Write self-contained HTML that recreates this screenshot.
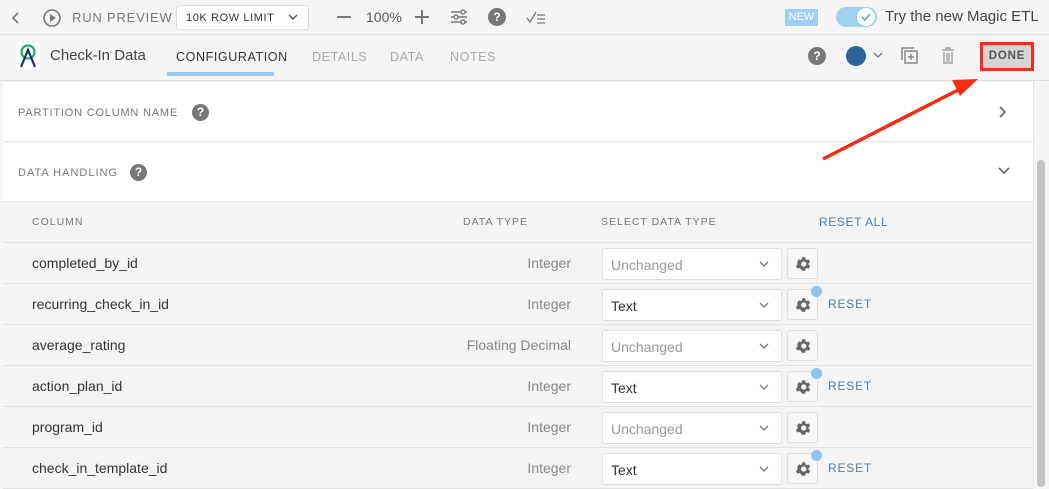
<!DOCTYPE html>
<html><head><style>
*{box-sizing:border-box;margin:0;padding:0}
body{width:1049px;height:487px;overflow:hidden;background:#f5f5f5;font-family:"Liberation Sans",sans-serif;position:relative;color:#333}
.a{position:absolute}
.cap{font-size:11px;letter-spacing:1px;color:#777}
.q{position:absolute;width:17px;height:17px;border-radius:50%;background:#777;color:#fff;font-size:12px;font-weight:bold;text-align:center;line-height:17px}
.row{position:absolute;left:3px;width:1030px;height:41px;border-bottom:1px solid #e2e2e2;background:#f4f4f4}
.cn{position:absolute;left:29px;top:12px;font-size:14px;color:#333}
.dt{position:absolute;right:462px;top:12px;font-size:14px;color:#888}
.sel{position:absolute;left:599px;top:5px;width:180px;height:32px;background:#fff;border:1px solid #ddd;border-radius:3px;font-size:14px;padding:8px 0 0 8px}
.sel svg{position:absolute;right:12px;top:12px}
.g{position:absolute;left:784px;top:5px;width:31px;height:31px;background:#f7f7f7;border:1px solid #ddd;border-radius:3px}
.g svg{position:absolute;left:6px;top:6px}
.dot{position:absolute;left:808px;top:2px;width:11px;height:11px;border-radius:50%;background:#8ec5ee}
.rs{position:absolute;left:825px;top:13px;font-size:12px;letter-spacing:.8px;color:#4d7fa8}
.tab{position:absolute;top:50px;font-size:12.5px;letter-spacing:.6px;color:#aaa}
</style></head><body>
<div class="a" style="left:0;top:0;width:1049px;height:35px;border-bottom:1px solid #e0e0e0"></div>
<svg class="a" style="left:11px;top:11px" width="10" height="14"><path d="M7 2L2 7l5 5" stroke="#777" stroke-width="1.6" fill="none"/></svg>
<svg class="a" style="left:42px;top:8px" width="20" height="20"><circle cx="10" cy="10" r="8" stroke="#777" stroke-width="1.6" fill="none"/><path d="M8 6v8l6-4z" fill="#777"/></svg>
<div class="a" style="left:72px;top:10px;font-size:13px;letter-spacing:.8px;color:#777">RUN PREVIEW</div>
<div class="a" style="left:176px;top:5px;width:133px;height:25px;background:#fff;border:1px solid #ddd;border-radius:3px;font-size:11px;letter-spacing:.6px;padding:6px 0 0 9px;color:#333">10K ROW LIMIT</div>
<svg class="a" style="left:288px;top:14px" width="10" height="7"><path d="M1 1l4 4 4-4" stroke="#555" stroke-width="1.4" fill="none"/></svg>
<div class="a" style="left:337px;top:16px;width:14px;height:1.6px;background:#777"></div>
<div class="a" style="left:366px;top:9px;font-size:14px;color:#555">100%</div>
<div class="a" style="left:415px;top:16px;width:14px;height:1.6px;background:#777"></div>
<div class="a" style="left:421px;top:10px;width:1.6px;height:14px;background:#777"></div>
<svg class="a" style="left:450px;top:9px" width="18" height="16"><g stroke="#777" stroke-width="1.4" fill="#f5f5f5"><path d="M1 3h16M1 8h16M1 13h16"/><circle cx="13" cy="3" r="2"/><circle cx="6" cy="8" r="2"/><circle cx="13" cy="13" r="2"/></g></svg>
<div class="q" style="left:488px;top:8px;width:18px;height:18px;line-height:18px">?</div>
<svg class="a" style="left:526px;top:10px" width="20" height="14"><path d="M1 8l3 4 6-10M11 5h8M11 9h8M11 13h8" stroke="#777" stroke-width="1.3" fill="none"/></svg>
<div class="a" style="left:785px;top:9px;width:33px;height:17px;background:#9fd0f2;color:#fff;font-size:11px;text-align:center;line-height:17px">NEW</div>
<div class="a" style="left:836px;top:7px;width:41px;height:20px;border-radius:10px;background:#9fd0f2"></div>
<div class="a" style="left:857px;top:8px;width:18px;height:18px;border-radius:50%;background:#fff"></div>
<svg class="a" style="left:860px;top:11px" width="12" height="12"><path d="M2 6l3 3 5-6" stroke="#5aa6de" stroke-width="1.6" fill="none"/></svg>
<div class="a" style="left:885px;top:8px;font-size:15px;color:#444">Try the new Magic ETL</div>
<div class="a" style="left:0;top:80px;width:1049px;height:1px;background:#e0e0e0"></div>
<svg class="a" style="left:16px;top:43px" width="24" height="26"><rect width="24" height="26" fill="#fff"/><circle cx="12" cy="9" r="6.5" stroke="#1fae6a" stroke-width="2.2" fill="none"/><path d="M5 24L12 7l7 17" stroke="#1d2f5a" stroke-width="2.2" fill="none"/></svg>
<div class="a" style="left:50px;top:47px;font-size:15px;color:#444">Check-In Data</div>
<div class="tab" style="left:176px;color:#333">CONFIGURATION</div>
<div class="a" style="left:167px;top:72px;width:107px;height:4px;background:#99c9ee"></div>
<div class="tab" style="left:312px">DETAILS</div>
<div class="tab" style="left:390px">DATA</div>
<div class="tab" style="left:450px">NOTES</div>
<div class="q" style="left:808px;top:47px;width:18px;height:18px;line-height:18px">?</div>
<div class="a" style="left:846px;top:46px;width:20px;height:20px;border-radius:50%;background:#2f6299"></div>
<svg class="a" style="left:873px;top:52px" width="10" height="7"><path d="M1 1l4 4 4-4" stroke="#777" stroke-width="1.3" fill="none"/></svg>
<svg class="a" style="left:900px;top:46px" width="19" height="19"><path d="M2 14V2h12" stroke="#888" stroke-width="1.5" fill="none"/><rect x="5" y="5" width="12" height="12" stroke="#888" stroke-width="1.5" fill="none"/><path d="M11 8v6M8 11h6" stroke="#888" stroke-width="1.5"/></svg>
<svg class="a" style="left:941px;top:47px" width="14" height="17"><path d="M1 3h12M5 3V1h4v2M3 5v11h8V5M6 6v9M8 6v9" stroke="#999" stroke-width="1.3" fill="none"/></svg>
<div class="a" style="left:980px;top:42px;width:54px;height:29px;border:3px solid #f22d14;background:#d4d4d4;font-size:11.5px;font-weight:bold;letter-spacing:.8px;color:#555;text-align:center;line-height:23px">DONE</div>
<div class="a" style="left:3px;top:82px;width:1030px;height:60px;background:#fff;border-bottom:1px solid #e6e6e6"></div>
<div class="a cap" style="left:18px;top:107px;letter-spacing:.8px">PARTITION COLUMN NAME</div>
<div class="q" style="left:192px;top:104px">?</div>
<svg class="a" style="left:998px;top:105px" width="10" height="14"><path d="M2 2l5 5-5 5" stroke="#666" stroke-width="1.6" fill="none"/></svg>
<div class="a" style="left:3px;top:143px;width:1030px;height:59px;background:#fff;border-bottom:1px solid #e6e6e6"></div>
<div class="a cap" style="left:18px;top:167px">DATA HANDLING</div>
<div class="q" style="left:130px;top:164px">?</div>
<svg class="a" style="left:997px;top:166px" width="14" height="10"><path d="M2 2l5 5 5-5" stroke="#666" stroke-width="1.6" fill="none"/></svg>
<div class="row" style="top:202px;height:41px"></div>
<div class="a cap" style="left:32px;top:216px;font-size:10.5px">COLUMN</div>
<div class="a cap" style="left:463px;top:216px;font-size:10.5px">DATA TYPE</div>
<div class="a cap" style="left:601px;top:216px;font-size:10.5px">SELECT DATA TYPE</div>
<div class="a" style="left:819px;top:215px;font-size:12px;letter-spacing:.6px;color:#4d7fa8">RESET ALL</div>

<div class="row" style="top:243px"><div class="cn">completed_by_id</div><div class="dt">Integer</div><div class="sel" style="color:#999">Unchanged<svg width="10" height="7"><path d="M1 1l4 4 4-4" stroke="#777" stroke-width="1.3" fill="none"/></svg></div><div class="g"><svg width="18" height="18" viewBox="0 0 24 24"><path fill="#666" d="M19.4 13a7.5 7.5 0 000-2l2.1-1.6-2-3.5-2.5 1a7.7 7.7 0 00-1.7-1L15 3h-4l-.4 2.6a7.7 7.7 0 00-1.7 1l-2.5-1-2 3.5L4.6 11a7.5 7.5 0 000 2l-2.1 1.6 2 3.5 2.5-1a7.7 7.7 0 001.7 1L11 21h4l.4-2.6a7.7 7.7 0 001.7-1l2.5 1 2-3.5zM13 15.5a3.5 3.5 0 110-7 3.5 3.5 0 010 7z"/></svg></div></div>
<div class="row" style="top:284px"><div class="cn">recurring_check_in_id</div><div class="dt">Integer</div><div class="sel" style="color:#333">Text<svg width="10" height="7"><path d="M1 1l4 4 4-4" stroke="#777" stroke-width="1.3" fill="none"/></svg></div><div class="g"><svg width="18" height="18" viewBox="0 0 24 24"><path fill="#666" d="M19.4 13a7.5 7.5 0 000-2l2.1-1.6-2-3.5-2.5 1a7.7 7.7 0 00-1.7-1L15 3h-4l-.4 2.6a7.7 7.7 0 00-1.7 1l-2.5-1-2 3.5L4.6 11a7.5 7.5 0 000 2l-2.1 1.6 2 3.5 2.5-1a7.7 7.7 0 001.7 1L11 21h4l.4-2.6a7.7 7.7 0 001.7-1l2.5 1 2-3.5zM13 15.5a3.5 3.5 0 110-7 3.5 3.5 0 010 7z"/></svg></div><div class="dot"></div><div class="rs">RESET</div></div>
<div class="row" style="top:325px"><div class="cn">average_rating</div><div class="dt">Floating Decimal</div><div class="sel" style="color:#999">Unchanged<svg width="10" height="7"><path d="M1 1l4 4 4-4" stroke="#777" stroke-width="1.3" fill="none"/></svg></div><div class="g"><svg width="18" height="18" viewBox="0 0 24 24"><path fill="#666" d="M19.4 13a7.5 7.5 0 000-2l2.1-1.6-2-3.5-2.5 1a7.7 7.7 0 00-1.7-1L15 3h-4l-.4 2.6a7.7 7.7 0 00-1.7 1l-2.5-1-2 3.5L4.6 11a7.5 7.5 0 000 2l-2.1 1.6 2 3.5 2.5-1a7.7 7.7 0 001.7 1L11 21h4l.4-2.6a7.7 7.7 0 001.7-1l2.5 1 2-3.5zM13 15.5a3.5 3.5 0 110-7 3.5 3.5 0 010 7z"/></svg></div></div>
<div class="row" style="top:366px"><div class="cn">action_plan_id</div><div class="dt">Integer</div><div class="sel" style="color:#333">Text<svg width="10" height="7"><path d="M1 1l4 4 4-4" stroke="#777" stroke-width="1.3" fill="none"/></svg></div><div class="g"><svg width="18" height="18" viewBox="0 0 24 24"><path fill="#666" d="M19.4 13a7.5 7.5 0 000-2l2.1-1.6-2-3.5-2.5 1a7.7 7.7 0 00-1.7-1L15 3h-4l-.4 2.6a7.7 7.7 0 00-1.7 1l-2.5-1-2 3.5L4.6 11a7.5 7.5 0 000 2l-2.1 1.6 2 3.5 2.5-1a7.7 7.7 0 001.7 1L11 21h4l.4-2.6a7.7 7.7 0 001.7-1l2.5 1 2-3.5zM13 15.5a3.5 3.5 0 110-7 3.5 3.5 0 010 7z"/></svg></div><div class="dot"></div><div class="rs">RESET</div></div>
<div class="row" style="top:407px"><div class="cn">program_id</div><div class="dt">Integer</div><div class="sel" style="color:#999">Unchanged<svg width="10" height="7"><path d="M1 1l4 4 4-4" stroke="#777" stroke-width="1.3" fill="none"/></svg></div><div class="g"><svg width="18" height="18" viewBox="0 0 24 24"><path fill="#666" d="M19.4 13a7.5 7.5 0 000-2l2.1-1.6-2-3.5-2.5 1a7.7 7.7 0 00-1.7-1L15 3h-4l-.4 2.6a7.7 7.7 0 00-1.7 1l-2.5-1-2 3.5L4.6 11a7.5 7.5 0 000 2l-2.1 1.6 2 3.5 2.5-1a7.7 7.7 0 001.7 1L11 21h4l.4-2.6a7.7 7.7 0 001.7-1l2.5 1 2-3.5zM13 15.5a3.5 3.5 0 110-7 3.5 3.5 0 010 7z"/></svg></div></div>
<div class="row" style="top:448px"><div class="cn">check_in_template_id</div><div class="dt">Integer</div><div class="sel" style="color:#333">Text<svg width="10" height="7"><path d="M1 1l4 4 4-4" stroke="#777" stroke-width="1.3" fill="none"/></svg></div><div class="g"><svg width="18" height="18" viewBox="0 0 24 24"><path fill="#666" d="M19.4 13a7.5 7.5 0 000-2l2.1-1.6-2-3.5-2.5 1a7.7 7.7 0 00-1.7-1L15 3h-4l-.4 2.6a7.7 7.7 0 00-1.7 1l-2.5-1-2 3.5L4.6 11a7.5 7.5 0 000 2l-2.1 1.6 2 3.5 2.5-1a7.7 7.7 0 001.7 1L11 21h4l.4-2.6a7.7 7.7 0 001.7-1l2.5 1 2-3.5zM13 15.5a3.5 3.5 0 110-7 3.5 3.5 0 010 7z"/></svg></div><div class="dot"></div><div class="rs">RESET</div></div>
<div class="a" style="left:1033px;top:81px;width:16px;height:406px;background:#f5f5f5;border-left:1px solid #e4e4e4"></div>
<div class="a" style="left:1037px;top:160px;width:8px;height:327px;border-radius:4px;background:#c4c4c4"></div>
<svg class="a" style="left:0;top:0" width="1049" height="487"><path d="M823 159L960 89" stroke="#f22d14" stroke-width="3.5"/><path d="M978 79L952 80l8 16z" fill="#f22d14"/></svg>
</body></html>
